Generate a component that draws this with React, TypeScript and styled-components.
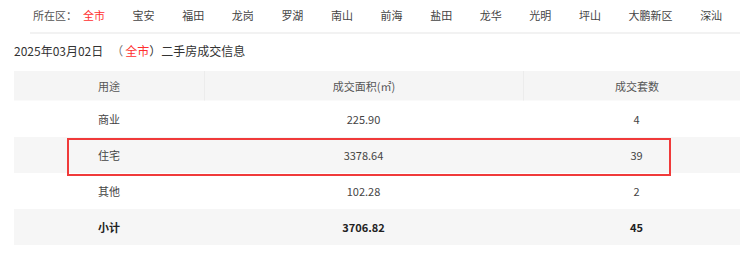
import React from "react";
import styled, { createGlobalStyle } from "styled-components";

const GlobalStyle = createGlobalStyle`
  html, body {
    margin: 0;
    padding: 0;
    overflow: hidden;
    background: #fff;
  }
  body {
    font-family: "Noto Sans CJK SC", "Noto Sans", sans-serif;
    color: #333;
  }
`;

const Page = styled.div`
  width: 740px;
  height: 266px;
  overflow: hidden;
`;

const AreaNav = styled.nav`
  display: flex;
  align-items: center;
  height: 32px;
  margin-left: 30px;
  padding-left: 3px;
  border-bottom: 2px solid #f2f2f2;
  white-space: nowrap;
`;

const AreaLabel = styled.span`
  flex: 0 0 50px;
  font-size: 11px;
  color: #555;
  padding-bottom: 2px;
`;

const AreaItem = styled.a<{ $active?: boolean }>`
  flex: 0 0 auto;
  font-size: 11px;
  margin-right: 27.6px;
  padding-bottom: 2px;
  color: ${(p) => (p.$active ? "#ff3030" : "#444")};
  text-decoration: none;
`;

const Title = styled.h3`
  margin: 7px 0 10px 14px;
  font-size: 12px;
  font-weight: normal;
  line-height: 20px;
  color: #333;
`;

const Red = styled.span`
  color: #ff3030;
`;

const Paren = styled.span`
  color: #777;
  margin: 0 2px 0 8px;
`;

const TableWrap = styled.div`
  position: relative;
  margin-left: 14px;
  width: 736px;
`;

const Grid = styled.div`
  display: grid;
  grid-template-columns: 190px 319px 227px;
`;

const HeadCell = styled.div`
  height: 30px;
  display: flex;
  align-items: center;
  justify-content: center;
  background: #f5f5f5;
  border-left: 1px solid #ececec;
  border-bottom: 1px solid #fafafa;
  box-sizing: border-box;
  font-size: 11px;
  color: #555;
  &:first-child {
    border-left: none;
  }
`;

const Cell = styled.div<{ $shade?: boolean; $bold?: boolean }>`
  height: 36px;
  display: flex;
  align-items: center;
  justify-content: center;
  background: ${(p) => (p.$shade ? "#f6f6f6" : "#fff")};
  font-size: 11px;
  font-weight: ${(p) => (p.$bold ? 700 : 400)};
  color: ${(p) => (p.$bold ? "#222" : "#444")};
`;

const Highlight = styled.div`
  position: absolute;
  left: 53px;
  top: 67px;
  width: 604px;
  height: 38px;
  box-sizing: border-box;
  border: 2px solid #f03a3a;
  pointer-events: none;
`;

const areas = [
  "全市",
  "宝安",
  "福田",
  "龙岗",
  "罗湖",
  "南山",
  "前海",
  "盐田",
  "龙华",
  "光明",
  "坪山",
  "大鹏新区",
  "深汕",
];

const rows = [
  { use: "商业", area: "225.90", count: "4" },
  { use: "住宅", area: "3378.64", count: "39" },
  { use: "其他", area: "102.28", count: "2" },
  { use: "小计", area: "3706.82", count: "45", total: true },
];

export default function App() {
  return (
    <Page>
      <GlobalStyle />
      <AreaNav>
        <AreaLabel>所在区：</AreaLabel>
        {areas.map((a, i) => (
          <AreaItem key={a} $active={i === 0}>
            {a}
          </AreaItem>
        ))}
      </AreaNav>

      <Title>
        2025年03月02日
        <Paren>（</Paren>
        <Red>全市</Red>）二手房成交信息
      </Title>

      <TableWrap>
        <Grid>
          <HeadCell>用途</HeadCell>
          <HeadCell>成交面积(㎡)</HeadCell>
          <HeadCell>成交套数</HeadCell>
          {rows.map((r, i) => (
            <React.Fragment key={r.use}>
              <Cell $shade={i % 2 === 1} $bold={r.total}>
                {r.use}
              </Cell>
              <Cell $shade={i % 2 === 1} $bold={r.total}>
                {r.area}
              </Cell>
              <Cell $shade={i % 2 === 1} $bold={r.total}>
                {r.count}
              </Cell>
            </React.Fragment>
          ))}
        </Grid>
        <Highlight />
      </TableWrap>
    </Page>
  );
}
